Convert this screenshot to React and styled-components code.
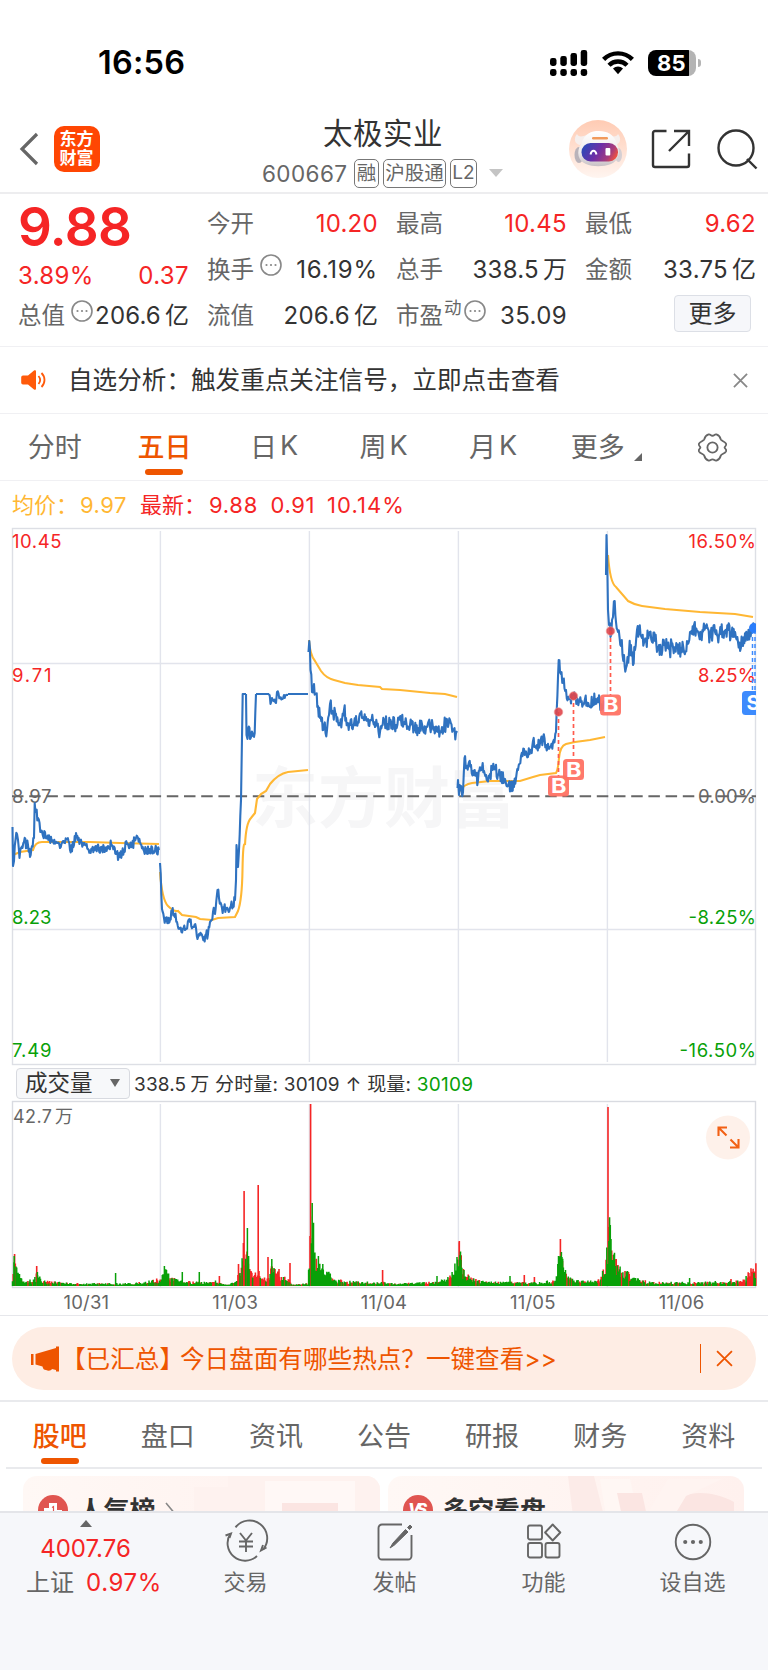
import React from 'react'
import styled, { createGlobalStyle } from 'styled-components'

const RED = '#f52525'
const GREEN = '#08a008'
const ORANGE = '#ee5500'
const BLUE = '#2f72c0'
const YELLOW = '#ffb733'
const GRID = '#e2e4ec'

const GlobalStyle = createGlobalStyle`
  * { box-sizing: border-box; }
  body {
    margin: 0;
    background: #fff;
    color: #333;
    font-family: Inter, "Noto Sans CJK SC", sans-serif;
    -webkit-font-smoothing: antialiased;
  }
  svg { display: block; flex: none; overflow: visible; }
`

const Screen = styled.div`
  width: 768px;
  height: 1670px;
  overflow: hidden;
  display: flex;
  flex-direction: column;
  white-space: nowrap;
`

/* ---------- status bar ---------- */

const StatusBar = styled.div`
  height: 106px;
  flex: none;
  display: flex;
  align-items: center;
  padding: 19px 67px 0 98px;
`

const Clock = styled.div`
  flex: 1;
  font-size: 32.5px;
  font-weight: 600;
  color: #000;
  letter-spacing: 0.2px;
`

const StatusIcons = styled.div`
  display: flex;
  align-items: center;
  gap: 14px;
`

const Battery = styled.div`
  width: 48px;
  height: 26px;
  border-radius: 8px;
  background: linear-gradient(90deg, #000 41px, #b4b4b4 41px);
  color: #fff;
  font-size: 22px;
  font-weight: 700;
  line-height: 27px;
  padding-left: 9px;
  letter-spacing: 0.2px;
`

const BatteryTip = styled.div`
  width: 3px;
  height: 8px;
  margin-left: -12px;
  border-radius: 0 3px 3px 0;
  background: #b4b4b4;
`

/* ---------- header ---------- */

const Header = styled.div`
  height: 88px;
  flex: none;
  display: grid;
  grid-template-columns: 240px 1fr 240px;
  border-bottom: 2px solid #ededef;
`

const HeaderLeft = styled.div`
  display: flex;
  align-items: center;
  gap: 15.5px;
  padding: 0 0 0 20px;
`

const Logo = styled.div`
  width: 46px;
  height: 46px;
  border-radius: 10px;
  background: #ff4603;
  color: #fff;
  font-size: 17px;
  font-weight: 700;
  line-height: 19px;
  text-align: center;
  padding-top: 4px;
  white-space: pre-line;
`

const HeaderTitle = styled.div`
  display: flex;
  flex-direction: column;
`

const StockName = styled.div`
  font-size: 29.5px;
  line-height: 40px;
  padding: 7px 0 0 83px;
  letter-spacing: 0.5px;
`

const StockMeta = styled.div`
  display: flex;
  align-items: center;
  height: 30px;
  margin-top: 5px;
  padding-left: 22px;
  color: #666;
  gap: 4px;
`

const Code = styled.span`
  font-size: 22.5px;
  width: 88px;
  letter-spacing: 0.4px;
`

const Badge = styled.span`
  height: 29px;
  width: ${p => p.w}px;
  text-align: center;
  border: 1px solid #777;
  border-radius: 5px;
  font-size: ${p => p.size || 19.5}px;
  line-height: 26px;
`

const HeaderRight = styled.div`
  display: flex;
  align-items: center;
  padding-left: 41px;
`

/* ---------- quote ---------- */

const Quote = styled.div`
  height: 153px;
  flex: none;
  display: flex;
  gap: 19px;
  padding: 7px 12px 0 18px;
  border-bottom: 1px solid #f0f0f3;
`

const QuoteMain = styled.div`
  width: 170px;
`

const Price = styled.div`
  font-size: 53px;
  line-height: 52px;
  height: 56px;
  font-weight: 600;
  color: ${RED};
  letter-spacing: -0.6px;
`

const QuoteGrid = styled.div`
  flex: 1;
  display: grid;
  grid-template-columns: repeat(3, 170px);
  grid-auto-rows: 46px;
  column-gap: 19px;
`

const Cell = styled.div`
  display: flex;
  justify-content: space-between;
  align-items: center;
  height: ${p => p.h || 45}px;
  font-size: 24px;
`

const Label = styled.span`
  display: flex;
  align-items: center;
  gap: 6px;
  color: #666;
  font-size: 23.5px;
  line-height: 30px;
  svg { margin-top: -9px; }
`

const Sup = styled.small`
  font-size: 17.5px;
  margin: -15px -4px 0 -5px;
`

const Value = styled.span`
  color: ${p => (p.up ? RED : '#333')};
  line-height: 30px;
  margin-right: -0.9px;
  letter-spacing: ${p => p.ls || 0.35}px;
`

const Unit = styled.span`
  margin-left: 4px;
  letter-spacing: 0;
`

const MoreButton = styled.div`
  width: 77px;
  height: 37px;
  margin: 2px 4px 0 auto;
  border: 1px solid #dcdfe6;
  border-radius: 4px;
  background: #f6f7fa;
  font-size: 24px;
  line-height: 35px;
  text-align: center;
`

/* ---------- notice ---------- */

const Notice = styled.div`
  height: 67px;
  flex: none;
  display: flex;
  align-items: center;
  padding: 0 20px 0 21px;
  font-size: 24.6px;
  border-bottom: 1px solid #f0f0f3;
`

const NoticeText = styled.div`
  flex: 1;
  padding: 0 0 4px 22px;
`

/* ---------- tabs ---------- */

const PeriodTabs = styled.div`
  height: 67px;
  flex: none;
  display: grid;
  grid-template-columns: repeat(7, 109.6px);
  border-bottom: 1px solid #f0f0f3;
`

const Tab = styled.div`
  position: relative;
  display: flex;
  align-items: center;
  justify-content: center;
  gap: 3px;
  padding-bottom: ${p => p.lift || 0}px;
  font-size: 27px;
  color: ${p => (p.active ? ORANGE : '#666')};
  font-weight: ${p => (p.active ? 500 : 400)};
  &::after {
    content: '';
    display: ${p => (p.active ? 'block' : 'none')};
    position: absolute;
    bottom: ${p => (p.lift ? 5 : 3)}px;
    left: calc(50% - 19px);
    width: 38px;
    height: 6px;
    border-radius: 3px;
    background: ${ORANGE};
  }
`

const Corner = styled.i`
  align-self: flex-end;
  margin: 0 -7px 15px 6px;
  border-left: 8px solid transparent;
  border-bottom: 8px solid #666;
`

/* ---------- charts ---------- */

const Legend = styled.div`
  height: 47px;
  flex: none;
  display: flex;
  align-items: center;
  padding: 0 12px;
  font-size: 22px;
  line-height: 30px;
  color: ${RED};
`

const LegendItem = styled.span`
  width: ${p => p.w}px;
  color: ${p => p.color || RED};
  letter-spacing: ${p => p.ls || 0}px;
`

const ChartBox = styled.div`
  height: ${p => p.h}px;
  flex: none;
  padding: 0 12px;
`

const Indicator = styled.div`
  height: 36px;
  flex: none;
  display: flex;
  align-items: center;
  padding: 0 16px;
  font-size: 19px;
  gap: 4px;
`

const IndicatorText = styled.span`
  letter-spacing: 0.15px;
  word-spacing: 0.2px;
  padding-bottom: 1px;
`

const Select = styled.div`
  width: 114px;
  height: 31px;
  display: flex;
  align-items: center;
  justify-content: space-between;
  padding: 0 9px 0 8px;
  border: 1px solid #d8dae0;
  border-radius: 4px;
  background: #f7f8fa;
  font-size: 22.5px;
  line-height: 27px;
`

const SelectText = styled.span`
  margin-top: -2px;
`

const Arrow = styled.i`
  border: 5px solid transparent;
  border-top: 8px solid #666;
  border-bottom: 0;
`

const Dates = styled.div`
  height: 28px;
  flex: none;
  display: grid;
  grid-template-columns: repeat(5, 148.8px);
  padding: 0 12px;
  font-size: 18.5px;
  line-height: 28px;
  letter-spacing: 0.2px;
  text-align: center;
  color: #666;
  border-bottom: 1px solid #e6e7eb;
`

/* ---------- banner ---------- */

const BannerWrap = styled.div`
  height: 86px;
  flex: none;
  padding: 11px 12px;
  border-bottom: 2px solid #e9eaed;
`

const Banner = styled.div`
  height: 63px;
  display: flex;
  align-items: center;
  padding: 0 23px 0 18px;
  border-radius: 32px;
  background: #feede4;
  color: ${ORANGE};
  font-size: 24.6px;
`

const BannerText = styled.div`
  flex: 1;
  padding-bottom: 3px;
  margin-left: 1px;
`

const Bracket = styled.span`
  margin-right: -4px;
`

const BannerRule = styled.i`
  width: 1.5px;
  height: 29px;
  margin-right: 15px;
  background: ${ORANGE};
`

/* ---------- lower section ---------- */

const SectionTabs = styled.div`
  height: 67px;
  flex: none;
  margin: 0 6px;
  display: grid;
  grid-template-columns: repeat(7, 108.1px);
  border-bottom: 2px solid #e9eaed;
  justify-content: center;
`

const Cards = styled.div`
  height: 42px;
  flex: none;
  overflow: hidden;
  display: flex;
  gap: 8px;
  padding: 7px 24px 0 23px;
`

const Card = styled.div`
  flex: 1;
  height: 90px;
  border-radius: 14px;
  background: linear-gradient(90deg, #fff8f5, #fff1ee);
  display: flex;
  align-items: flex-start;
  position: relative;
  padding: 19px 15px;
  overflow: hidden;
`

const CardTitle = styled.div`
  position: relative;
  font-size: 25.8px;
  line-height: 32px;
  font-weight: 700;
  padding: 0 11px 0 10px;
`

const CardArt = styled.svg`
  position: absolute;
  right: 0;
  top: 0;
`

/* ---------- bottom bar ---------- */

const BottomBar = styled.div`
  height: 160px;
  flex: none;
  display: grid;
  grid-template-columns: 171px repeat(4, 149px);
  border-top: 2px solid #e4e5e9;
  background: #f6f7fa;
  color: #666;
`

const NavItem = styled.div`
  display: flex;
  flex-direction: column;
  align-items: center;
  padding-top: 10px;
  font-size: 22px;
  line-height: 30px;
`

const NavIcon = styled.span`
  height: 44px;
`

const Market = styled.div`
  display: flex;
  flex-direction: column;
  align-items: center;
  padding-top: 7px;
  font-size: 24px;
  line-height: 34px;
`

const UpArrow = styled.i`
  border: 6.5px solid transparent;
  border-bottom: 7px solid #666;
  border-top: 0;
  margin-bottom: 5px;
`

const Up = styled.span`
  color: ${RED};
  letter-spacing: ${p => p.ls || 0}px;
`

const MarketRow = styled.span`
  display: flex;
  gap: 12px;
  padding-left: 17px;
  line-height: 33px;
`

/* ---------- icons ---------- */

const Dots = ({ size = 22, stroke = 1.6, color = '#888', dot = 1.1 }) => (
  <svg width={size} height={size} viewBox="0 0 22 22" fill={color}>
    <circle cx="11" cy="11" r="10" fill="none" stroke={color} strokeWidth={stroke} />
    <circle cx="6.5" cy="11" r={dot} />
    <circle cx="11" cy="11" r={dot} />
    <circle cx="15.5" cy="11" r={dot} />
  </svg>
)

const Signal = () => (
  <svg width="38" height="26" viewBox="0 0 38 26">
    {[[0, 8], [10.3, 6], [20.5, 3], [30.7, 0]].map(([x, y]) => (
      <g key={x}>
        <rect x={x} y={y} width="6.5" height={16 - y} rx="2.4" />
        <rect x={x} y="19" width="6.5" height="7" rx="2.4" />
      </g>
    ))}
  </svg>
)

const Wifi = () => (
  <svg width="32" height="24" viewBox="0 0 32 24" fill="none" stroke="#000" strokeWidth="4.4">
    <path d="M1.6 8.4C9.5.3 22.5.3 30.4 8.4" />
    <path d="M7 14.2c5-5 13-5 18 0" />
    <path d="M11 17.6c2.9-2.7 7.1-2.7 10 0l-5 5.6z" fill="#000" stroke="none" />
  </svg>
)

const Robot = () => (
  <svg width="58" height="58" viewBox="0 0 58 58">
    <defs>
      <linearGradient id="peach" x1="0" y1="0" x2="0" y2="1">
        <stop offset="0" stopColor="#ffcbb3" />
        <stop offset="1" stopColor="#fff5f0" />
      </linearGradient>
      <linearGradient id="visor" x1="0" y1="0.3" x2="1" y2="0.6">
        <stop offset="0" stopColor="#2a49b8" />
        <stop offset="0.45" stopColor="#6d2fa6" />
        <stop offset="0.8" stopColor="#a83c7c" />
        <stop offset="1" stopColor="#f0523e" />
      </linearGradient>
      <linearGradient id="shell" x1="0" y1="0" x2="0" y2="1">
        <stop offset="0" stopColor="#fff" />
        <stop offset="0.6" stopColor="#eeebeb" />
        <stop offset="1" stopColor="#c8c1c5" />
      </linearGradient>
    </defs>
    <circle cx="29" cy="29" r="29" fill="url(#peach)" />
    <path d="M8 14c-4 5-2 10 3 11l7-10c-5 2-9 2-10-1zM49 14c4 5 2 10-3 11l-7-10c5 2 9 2 10-1z" fill="#f6efed" />
    <ellipse cx="10" cy="35" rx="4.5" ry="8" fill="#b9b3ba" />
    <ellipse cx="49.5" cy="35" rx="3.5" ry="7" fill="#d5cfd3" />
    <path d="M12 24C16 13 22 11 30 11s15 3 18 13c4 9 1 17-6 20-8 3-18 3-25 0C9 41 7 32 12 24z" fill="url(#shell)" />
    <rect x="23" y="17" width="16" height="2.6" rx="1.3" fill="#f19a5b" />
    <rect x="12.5" y="23" width="36.5" height="18.5" rx="9" fill="url(#visor)" />
    <path d="M21.5 34.5c1-5 5-5 6 0" fill="none" stroke="#fff" strokeWidth="1.9" />
    <rect x="36.5" y="28" width="4.8" height="7.5" rx="1" fill="#fff" />
  </svg>
)

const Share = () => (
  <svg width="40" height="40" viewBox="0 0 40 40" fill="none" stroke="#333" strokeWidth="2.4">
    <path d="M15.5 2H4a2 2 0 0 0-2 2v32a2 2 0 0 0 2 2h32a2 2 0 0 0 2-2V24.5" />
    <path d="M23 2h15v15M38 2 18 22" />
  </svg>
)

const SearchIcon = () => (
  <svg width="40" height="40" viewBox="0 0 40 40" fill="none" stroke="#333" strokeWidth="2.4">
    <circle cx="19" cy="19" r="17.5" />
    <path d="m30 30 9.5 9.5" />
  </svg>
)

const Speaker = () => (
  <svg width="25" height="20" viewBox="0 0 25 20" fill="#ff5a0a">
    <path d="M2 5.500h5L13 .6c1-.8 2-.3 2 .9v17c0 1.200-1 1.700-2 .9l-6-4.900H2a1.800 1.800 0 0 1-1.800-1.800V7.300A1.800 1.800 0 0 1 2 5.500z" />
    <path d="M17.5 6c2 2.400 2 5.600 0 8M20.500 3c4 4 4 10 0 14" fill="none" stroke="#ff5a0a" strokeWidth="1.8" />
  </svg>
)

const Cross = ({ size = 15, color = '#888', w = 1.9 }) => (
  <svg width={size} height={size} viewBox="0 0 16 16" fill="none" stroke={color} strokeWidth={w}>
    <path d="m1 1 14 14M15 1 1 15" />
  </svg>
)

const Gear = () => (
  <svg width="31" height="29" viewBox="0 0 32 30" fill="none" stroke="#666" strokeWidth="1.9">
    <path d="M12 1.500c1.800-.5 2 1.300 4 1.300s2.200-1.800 4-1.300c3 1 4 3 4.500 5 .5 1.800 4.500 2.200 5.500 4.500 1 2.500-1.500 2.800-1.500 4s2.500 1.500 1.500 4c-1 2.300-5 2.700-5.500 4.500-.5 2-1.500 4-4.500 5-1.800.5-2-1.300-4-1.300s-2.200 1.800-4 1.300c-3-1-4-3-4.500-5C7 21.700 3 21.300 2 19c-1-2.500 1.500-2.800 1.500-4S1 13.500 2 11c1-2.300 5-2.700 5.500-4.500.5-2 1.500-4 4.500-5z" />
    <circle cx="16" cy="15" r="5.3" />
  </svg>
)

const Horn = () => (
  <svg width="30" height="26" viewBox="0 0 30 26" fill={ORANGE}>
    <path d="M1 8h2.5v11H1zM5.500 8 26 2V.5h3v25h-3V24l-4-1c-1 2-4 2-6 1-2 0-3-1-3.500-3.500l-7-2z" />
  </svg>
)

const Trade = () => (
  <svg width="42" height="38" viewBox="0 0 42 38" fill="none" stroke="#666" strokeWidth="1.9">
    <path d="M10.500 4.300A17.500 17.500 0 0 1 38.500 26M32 33A17.500 17.500 0 0 1 5.500 10.500" />
    <path d="M.5 12.500 6 10.500 4.500 15M41.500 24.500 36 27.500 38 22" />
    <path d="m15 10 6 7.500 6-7.500M21 17.500V29M14 18.500h14M14 23.500h14" />
  </svg>
)

const Compose = () => (
  <svg width="36" height="38" viewBox="0 0 36 38" fill="none" stroke="#666" strokeWidth="1.9">
    <path d="M25 1.500H5A3.500 3.500 0 0 0 1.500 5v28A3.500 3.500 0 0 0 5 36.500h26a3.500 3.500 0 0 0 3.500-3.500V12" />
    <path d="m13 25 3-5L28.500 6.500 31 9 17.500 22zM30.500 4.500 33 2l2 2-2.500 2.500z" fill="#666" strokeWidth="1" />
  </svg>
)

const Apps = () => (
  <svg width="34" height="38" viewBox="0 0 34 38" fill="none" stroke="#666" strokeWidth="1.9">
    <rect x="1" y="2.500" width="14" height="14" rx="2" />
    <rect x="1" y="20" width="14" height="14.500" rx="2" />
    <rect x="18.500" y="20" width="14" height="14.500" rx="2" />
    <path d="m25.700 1.500 7.600 8-7.600 8-7.600-8z" strokeLinejoin="round" />
  </svg>
)

/* ---------- chart data ---------- */

// each day: [x, y] turning points of the price line
const PRICE = [
  [[12.5, 827], [13, 866], [14, 861], [15.5, 840], [17, 834], [18, 840], [19.5, 858], [21, 848], [24, 842], [28, 845], [30, 857], [32, 846], [34, 838], [34.7, 803], [36, 812], [38, 818], [41, 832], [43, 836], [45, 832], [47, 838], [53, 841], [57, 843], [60, 848], [63, 841], [67, 839], [70, 850], [74, 845], [76, 833], [78, 840], [83, 843], [88, 849], [92, 849], [96, 846], [102, 850], [108, 846], [112, 845], [116, 854], [120, 857], [124, 850], [127, 844], [132, 846], [136, 838], [140, 842], [144, 851], [150, 849], [155, 850], [159, 850]],
  [[160, 863], [162, 909], [164, 918], [166, 921], [170, 920], [172, 912], [174, 914], [177, 922], [180, 928], [185, 930], [190, 922], [194, 927], [196, 928], [197.5, 939], [199, 934], [204, 937], [208, 934], [210, 922], [213, 912], [215, 914], [217.5, 890], [219, 898], [222, 908], [226, 909], [230, 908], [233, 905], [235, 900], [236, 880], [236.5, 845], [238, 867], [239, 850], [241, 800]],
  [[246, 694], [246.5, 735], [247.5, 739], [249.5, 728], [250, 739], [252.5, 733], [254.7, 733], [256, 694]],
  [[269, 694], [270.5, 704], [272, 698], [276, 703], [277, 692], [280, 698], [284, 695], [288, 695]],
  [[308.5, 652], [309.3, 641], [310.5, 670], [312, 692], [314, 684], [316, 694], [318, 706], [320, 718], [324, 726], [327, 730], [329, 715], [330, 704], [333, 712], [336, 714], [338, 722], [342, 720], [344, 710], [346, 718], [350, 725], [354, 724], [358, 722], [362, 718], [366, 717], [370, 720], [373, 721], [377, 725], [380, 732], [384, 722], [388, 724], [392, 722], [396, 725], [401, 720], [405, 724], [410, 725], [414, 729], [418, 728], [422, 724], [426, 728], [430, 727], [434, 727], [438, 732], [442, 727], [446, 724], [450, 720], [453, 730], [456, 733], [457, 731]],
  [[457.5, 788], [458, 780], [459, 795], [461, 786], [463, 792], [464.5, 758], [467, 768], [471, 765], [474, 775], [478, 780], [482, 768], [486, 775], [490, 774], [494, 769], [500, 775], [505, 779], [508, 786], [514, 787], [518, 770], [521, 756], [524, 749], [528, 757], [531, 750], [533, 741], [537, 745], [540, 743], [543, 738], [546, 745], [550, 747], [553, 742], [556, 732], [558.7, 660], [560, 672], [563, 680], [566, 690], [569, 699], [573, 699], [577, 698], [581, 702], [585, 699], [589, 706], [593, 700], [597, 700], [601, 704], [605, 702]],
  [[606, 575], [606.5, 535], [608, 610], [609, 625], [610.5, 637], [612, 620], [613, 617], [614.7, 601], [616, 622], [618, 632], [621, 646], [624, 655], [626, 668], [629, 652], [631, 645], [633, 665], [635, 650], [637, 630], [639, 629], [642, 638], [646, 640], [649, 634], [652, 642], [655, 641], [659, 645], [661, 653], [665, 644], [669, 649], [673, 647], [677, 647], [681, 648], [684, 652], [687, 641], [690, 632], [694, 625], [697, 631], [701, 633], [706, 628], [710, 636], [715, 632], [719, 635], [723, 632], [728, 630], [733, 637], [738, 642], [743, 646], [747, 638], [750, 630], [754, 628]],
]

// how rough each piece of the price line is
const ROUGH = [5, 5, 6, 3, 7.5, 7, 9]

const AVERAGE = [
  'M13 855 20 852 33 850Q35 842 42 842L60 842 90 842 120 843 159 844',
  'M160 872Q162 900 168 906T178 911L182 915 196 917 200 919 212 920 218 918 235 917 238 911Q242 900 242.500 870T245 845Q246 823 251 818L255 813 257 799 261 794 266 791 270 784Q278 774 288 772L308 770',
  'M309 640Q310 655 315 661L321 671Q326 678 334 680L345 683 358 685 380 687 382 689 400 690 430 693 445 694 457 697',
  'M459 792Q464 784 472 783L490 781 520 781 533 777 540 775 556 773Q558 770 559 758T566 744L575 742 590 740 605 737',
  'M608 555Q610 583 616 587L628 601Q635 605 642 606L665 609 700 612 735 614 753 617',
]

const seeded = start => {
  let s = start
  return () => {
    s = (s * 16807) % 2147483647
    return s / 2147483647
  }
}

const wobble = (points, amp, seed) => {
  const rand = seeded(seed)
  let d = `M${points[0][0]} ${points[0][1]}`
  for (let i = 1; i < points.length; i++) {
    const [x0, y0] = points[i - 1]
    const [x1, y1] = points[i]
    const n = Math.max(1, Math.round((x1 - x0) / 0.7))
    for (let k = 1; k <= n; k++) {
      const t = k / n
      const off = k === n ? 0 : (rand() - 0.5) * 2 * amp
      d += `L${(x0 + (x1 - x0) * t).toFixed(1)} ${(y0 + (y1 - y0) * t + off).toFixed(1)}`
    }
  }
  return d
}

const DAY_LINES = [160.4, 309.4, 458.4, 607.4]

const BUYS = [
  { x: 558.5, y: 712, by: 786 },
  { x: 573.5, y: 696, by: 769.5 },
  { x: 610.5, y: 631, by: 705 },
]

// envelope of the volume bars: [x, height]
const VOLUME_BASE = [
  [12, 4], [14, 25], [17, 13], [22, 5], [34, 5], [37, 10], [42, 4], [60, 3], [80, 2], [130, 2], [150, 4], [161, 6], [164, 15], [170, 7], [180, 4], [200, 3], [215, 4], [225, 1], [236, 3], [240, 14], [244, 28], [250, 22], [254, 10], [268, 6], [273, 17], [280, 8], [290, 5], [292, 1], [308, 2], [309.8, 30], [311, 90], [313, 60], [316, 20], [322, 14], [328, 12], [334, 6], [345, 4], [370, 3], [385, 3], [400, 2], [430, 3], [445, 5], [454, 12], [459, 32], [463, 14], [470, 6], [485, 4], [500, 3], [540, 3], [556, 5], [559, 28], [563, 20], [567, 7], [580, 4], [600, 5], [606, 18], [609, 60], [612, 32], [617, 16], [627, 11], [635, 6], [650, 3], [700, 3], [735, 4], [745, 6], [750, 12], [756, 16],
]

const SPIKES = [
  [14.2, 30, 0], [36.7, 20, 1], [37.4, 14, 0], [115.6, 13, 0], [165, 14, 0], [182.3, 14, 0], [199.3, 14, 0], [219.4, 10, 1],
  [238.5, 22, 1], [244.1, 95, 1], [243.4, 43, 1], [247.4, 58, 0], [248.6, 30, 0], [258.2, 101, 1], [259, 15, 1], [268, 29, 1],
  [271.8, 27, 0], [274, 18, 0], [279, 17, 1], [290, 23, 1], [310.6, 182, 1], [312.2, 83, 0], [313.2, 50, 0], [318.4, 30, 0],
  [322.8, 22, 0], [328.5, 14, 0], [382.6, 16, 1], [437, 10, 0], [459.3, 45, 1], [460, 31, 0], [461, 26, 0], [463.4, 17, 1],
  [510, 10, 0], [524.3, 11, 1], [534.4, 9, 1], [560.4, 47, 1], [561.4, 34, 0], [562.5, 25, 1], [608, 179, 1], [609.2, 59, 1],
  [609.7, 54, 0], [611, 47, 0], [613.5, 31, 1], [616.2, 27, 1], [627.5, 15, 0], [689.6, 8, 0], [731, 7, 1], [751, 15, 1], [754, 13, 0],
]

const volumeBars = () => {
  const rand = seeded(977)
  const paths = ['', '']
  let i = 0
  for (let x = 12.5; x < 756; x += 0.7) {
    while (VOLUME_BASE[i + 1][0] < x) i++
    const [x0, h0] = VOLUME_BASE[i]
    const [x1, h1] = VOLUME_BASE[i + 1]
    const h = (h0 + ((h1 - h0) * (x - x0)) / (x1 - x0)) * (0.5 + rand() * 0.95)
    const redBias = (x > 236 && x < 292) || x > 735 ? 0.75 : 0.36
    const k = rand() < redBias ? 1 : 0
    paths[k] += `M${x.toFixed(1)} 1286v-${Math.max(1.2, h).toFixed(1)}`
  }
  SPIKES.forEach(([x, h, k]) => {
    paths[k] += `M${x} 1286v-${h}`
  })
  return paths
}

const AXIS_LEFT = [['10.45', 547.5, RED], ['9.71', 682, RED], ['8.97', 802.5, '#666'], ['8.23', 923.5, GREEN], ['7.49', 1057, GREEN]]
const AXIS_RIGHT = [['16.50%', 547.5, RED, 67.5], ['8.25%', 682, RED, 58], ['0.00%', 802.5, '#666', 58], ['-8.25%', 923.5, GREEN, 67.5], ['-16.50%', 1057, GREEN, 76.5]]

const PriceChart = () => (
  <svg width="744" height="537" viewBox="12 528 744 537" fontSize="18.5" fill="none">
    <text x="252" y="822" fontSize="66" fontWeight="700" fill="#f6f6f7" textLength="264">东方财富</text>
    <g stroke={GRID} strokeWidth="1.4">
      <path d="M12 663.5h744M12 929.5h744" />
      {DAY_LINES.map(x => <path key={x} d={`M${x} 531v531`} />)}
      <rect x="12.5" y="528.5" width="743" height="536" stroke="#dddfe5" />
    </g>
    <path d="M12 796.3h744" stroke="#666" strokeWidth="2" strokeDasharray="11.5 5.7" />
    {AXIS_LEFT.map(([t, y, c], i) => (
      <text key={t} x="12" y={y} fill={c} textLength={i ? 39.5 : 49.5}>{t}</text>
    ))}
    {AXIS_RIGHT.map(([t, y, c, w]) => (
      <text key={t} x={756 - w} y={y} fill={c} textLength={w}>{t}</text>
    ))}
    <g stroke={YELLOW} strokeWidth="2.1">
      {AVERAGE.map(d => <path key={d} d={d} />)}
    </g>
    <g stroke={BLUE} strokeWidth="2.1" strokeLinejoin="round">
      {PRICE.map((points, i) => <path key={i} d={wobble(points, ROUGH[i], 31 + i * 57)} />)}
      <path d="M241 800 242.7 694H246M256 694H269M288 694H308" />
    </g>
    {BUYS.map(b => (
      <g key={b.x}>
        <path d={`M${b.x} ${b.y}V${b.by - 10}`} stroke="#ff5b4d" strokeWidth="1.7" strokeDasharray="4 3" />
        <circle cx={b.x} cy={b.y} r="4.3" fill="#e0464b" fillOpacity="0.9" stroke="#f0a3a0" strokeWidth="0.6" />
        <rect x={b.x - 10.5} y={b.by - 10.5} width="21" height="21" rx="3.5" fill="#ff6f61" fillOpacity="0.93" />
        <text x={b.x - 7.5} y={b.by + 7.2} fontSize="20" fontWeight="700" fill="#fff" textLength="15.5" lengthAdjust="spacingAndGlyphs">B</text>
      </g>
    ))}
    <svg x="735" y="615" width="21" height="105" viewBox="735 615 21 105" style={{ overflow: 'hidden' }}>
      <path d="M752.5 630V692M755 630V692" stroke="#3d8bfd" strokeWidth="1.5" strokeDasharray="4 3" />
      <circle cx="754" cy="628" r="5" fill="#2a7dfb" />
      <rect x="742" y="691" width="21" height="24" rx="3.5" fill="#3d8bfd" />
      <text x="753" y="710" fontSize="20" fontWeight="700" fill="#fff" textAnchor="middle">S</text>
    </svg>
  </svg>
)

const VolumeChart = () => {
  const [down, up] = volumeBars()
  return (
    <svg width="744" height="187" viewBox="12 1101 744 187" fill="none">
      <g stroke={GRID} strokeWidth="1.4">
        {DAY_LINES.map(x => <path key={x} d={`M${x} 1104v183`} />)}
        <rect x="12.5" y="1101.5" width="743" height="186" stroke="#d9dbe1" />
      </g>
      <path d={up} stroke={RED} strokeWidth="1.6" />
      <path d={down} stroke={GREEN} strokeWidth="1.5" />
      <text x="13" y="1123" fontSize="18" fill="#666" textLength="39">42.7</text>
      <text x="55" y="1123" fontSize="18" fill="#666">万</text>
      <circle cx="728" cy="1137.5" r="22" fill="#fef1ea" />
      <g stroke="#f26014" strokeWidth="2.1">
        <path d="M718.5 1136v-8.5h8.5M719 1128l7.5 7.5M738.5 1139v8.5h-8.5M738 1147l-7.5-7.5" />
      </g>
    </svg>
  )
}

/* ---------- page ---------- */

const QUOTES = [
  ['今开', '10.20', '', true], ['最高', '10.45', '', true], ['最低', '9.62', '', true],
  ['换手', '16.19%', '', false, true], ['总手', '338.5', '万'], ['金额', '33.75', '亿'],
  ['流值', '206.6', '亿'],
]

const App = () => (
  <Screen>
    <GlobalStyle />
    <StatusBar>
      <Clock>16:56</Clock>
      <StatusIcons>
        <Signal />
        <Wifi />
        <Battery>85</Battery>
        <BatteryTip />
      </StatusIcons>
    </StatusBar>

    <Header>
      <HeaderLeft>
        <svg width="18" height="32" viewBox="0 0 18 32" fill="none" stroke="#666" strokeWidth="3.2">
          <path d="M17 1 2 16l15 15" />
        </svg>
        <Logo>{'东方\n财富'}</Logo>
      </HeaderLeft>
      <HeaderTitle>
        <StockName>太极实业</StockName>
        <StockMeta>
          <Code>600667</Code>
          <Badge w={25}>融</Badge>
          <Badge w={63}>沪股通</Badge>
          <Badge w={27} size={19}>L2</Badge>
          <svg width="14" height="8" viewBox="0 0 14 8" style={{ marginLeft: 8 }}><path d="M0 0h14L7 8z" fill="#c4c4c4" /></svg>
        </StockMeta>
      </HeaderTitle>
      <HeaderRight>
        <Robot />
        <svg width="24" height="1" />
        <Share />
        <svg width="26" height="1" />
        <SearchIcon />
      </HeaderRight>
    </Header>

    <Quote>
      <QuoteMain>
        <Price>9.88</Price>
        <Cell h={38}>
          <Value up>3.89%</Value>
          <Value up>0.37</Value>
        </Cell>
        <Cell h={41}>
          <Label>总值<Dots /></Label>
          <Value ls={0.15}>206.6<Unit>亿</Unit></Value>
        </Cell>
      </QuoteMain>
      <QuoteGrid>
        {QUOTES.map(([label, value, unit, up, info]) => (
          <Cell key={label}>
            <Label>{label}{info && <Dots />}</Label>
            <Value up={up} ls={info ? 0.8 : 0.25}>{value}{unit && <Unit>{unit}</Unit>}</Value>
          </Cell>
        ))}
        <Cell>
          <Label>市盈<Sup>动</Sup><Dots /></Label>
          <Value>35.09</Value>
        </Cell>
        <MoreButton>更多</MoreButton>
      </QuoteGrid>
    </Quote>

    <Notice>
      <Speaker />
      <NoticeText>自选分析：触发重点关注信号，立即点击查看</NoticeText>
      <Cross />
    </Notice>

    <PeriodTabs>
      <Tab lift={4}>分时</Tab>
      <Tab lift={4} active>五日</Tab>
      <Tab lift={4}>日<span>K</span></Tab>
      <Tab lift={4}>周<span>K</span></Tab>
      <Tab lift={4}>月<span>K</span></Tab>
      <Tab lift={4}>更多<Corner /></Tab>
      <Tab><Gear /></Tab>
    </PeriodTabs>

    <Legend>
      <LegendItem w={68} color={YELLOW}>均价：</LegendItem>
      <LegendItem w={60} color={YELLOW} ls={0.5}>9.97</LegendItem>
      <LegendItem w={69}>最新：</LegendItem>
      <LegendItem w={61.5} ls={0.7}>9.88</LegendItem>
      <LegendItem w={56.5} ls={0.6}>0.91</LegendItem>
      <LegendItem ls={1.1}>10.14%</LegendItem>
    </Legend>

    <ChartBox h={537}><PriceChart /></ChartBox>

    <Indicator>
      <Select><SelectText>成交量</SelectText><Arrow /></Select>
      <IndicatorText>338.5<Unit>万</Unit> 分时量: 30109 ↑ 现量: <LegendItem color={GREEN} ls={0.25}>30109</LegendItem></IndicatorText>
    </Indicator>

    <ChartBox h={187}><VolumeChart /></ChartBox>

    <Dates>
      {['10/31', '11/03', '11/04', '11/05', '11/06'].map(d => <span key={d}>{d}</span>)}
    </Dates>

    <BannerWrap>
      <Banner>
        <Horn />
        <BannerText><Bracket>【已汇总】</Bracket>今日盘面有哪些热点？一键查看&gt;&gt;</BannerText>
        <BannerRule />
        <Cross size={17} color={ORANGE} w={1.7} />
      </Banner>
    </BannerWrap>

    <SectionTabs>
      {['股吧', '盘口', '资讯', '公告', '研报', '财务', '资料'].map((t, i) => (
        <Tab key={t} active={i === 0}>{t}</Tab>
      ))}
    </SectionTabs>

    <Cards>
      <Card>
        <CardArt width="190" height="40" viewBox="0 0 190 40">
          <path d="M4 11h34V0h152v40H4z" fill="#fef2ef" />
          <path d="M75 5h90v40H75z" fill="#fff8f6" />
          <path d="M92 40h56v-13H92z" fill="#fbe5e2" />
        </CardArt>
        <svg width="30" height="30" viewBox="0 0 30 30">
          <circle cx="15" cy="15" r="15" fill="#e05550" />
          <path d="M6 13h5v12H6zM11 8h8v17h-8zM19 15h5v10h-5z" fill="#fff" />
          <path d="M14 12.500l1.500-1v6" fill="none" stroke="#e05550" strokeWidth="1.2" />
        </svg>
        <CardTitle>人气榜</CardTitle>
        <svg width="8" height="18" viewBox="0 0 8 18" fill="none" stroke="#888" strokeWidth="1.6" style={{ marginTop: 8 }}>
          <path d="m0 0 7.500 9L0 18" />
        </svg>
      </Card>
      <Card>
        <CardArt width="180" height="40" viewBox="0 0 180 40">
          <path d="M4 0h26l10 40H9z" fill="#fcebe8" />
          <path d="M36 3h30l8 37H42z" fill="#fff7f4" />
          <path d="M53 17h25l5 23H58zM100 40c8-24 40-30 70-14v14z" fill="#fbe5e2" />
          <path d="M82 40 104 3h54L122 20l-12 20z" fill="#fff4f1" />
        </CardArt>
        <svg width="30" height="30" viewBox="0 0 30 30">
          <circle cx="15" cy="15" r="15" fill="#e05550" />
          <text x="5" y="19.5" fontSize="16" fontWeight="800" fontStyle="italic" fill="#fff" textLength="19">VS</text>
        </svg>
        <CardTitle>多空看盘</CardTitle>
      </Card>
    </Cards>

    <BottomBar>
      <Market>
        <UpArrow />
        <Up>4007.76</Up>
        <MarketRow>上证<Up ls={0.6}>0.97%</Up></MarketRow>
      </Market>
      <NavItem><NavIcon><Trade /></NavIcon>交易</NavItem>
      <NavItem><NavIcon><Compose /></NavIcon>发帖</NavItem>
      <NavItem><NavIcon><Apps /></NavIcon>功能</NavItem>
      <NavItem><NavIcon><Dots size={38} stroke={1.1} color="#666" dot={1.2} /></NavIcon>设自选</NavItem>
    </BottomBar>
  </Screen>
)

export default App
